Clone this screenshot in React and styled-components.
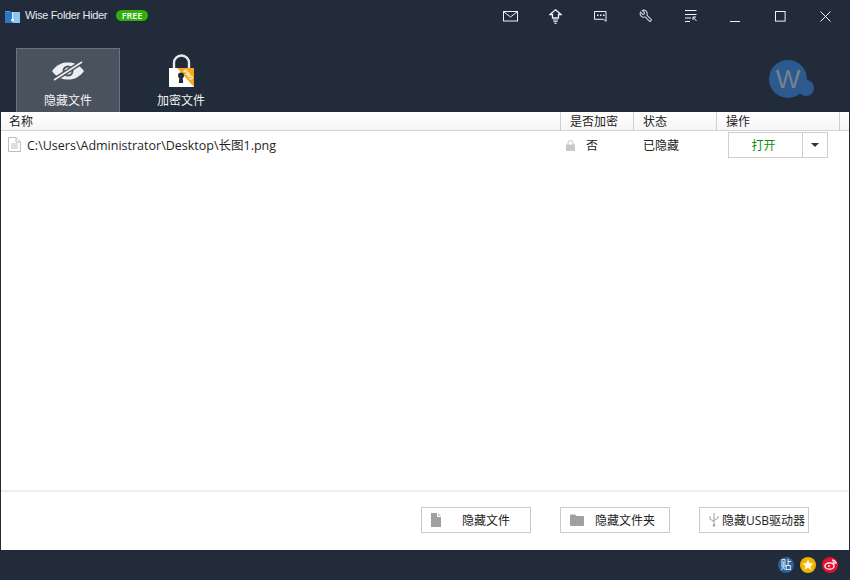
import React from "react";
import styled, { createGlobalStyle } from "styled-components";

const GlobalStyle = createGlobalStyle`
  html, body {
    margin: 0;
    padding: 0;
    background: #212b3a;
  }
  body {
    font-family: "Open Sans", "Noto Sans CJK SC", sans-serif;
    font-size: 12px;
    color: #222;
  }
  * {
    box-sizing: border-box;
  }
`;

const Window = styled.div`
  width: 850px;
  height: 580px;
  display: flex;
  flex-direction: column;
  background: #212b3a;
  overflow: hidden;
`;

const TitleBar = styled.div`
  height: 32px;
  display: flex;
  align-items: center;
  padding-left: 5px;
  padding-right: 2px;
`;

const AppName = styled.span`
  margin-left: 5px;
  margin-bottom: 2px;
  color: #e6e9ee;
  font-family: "Liberation Sans", sans-serif;
  font-size: 11px;
  letter-spacing: -0.35px;
`;

const FreeBadge = styled.span`
  margin-left: 9px;
  margin-bottom: 2px;
  width: 32px;
  height: 11px;
  border-radius: 6px;
  background: #2fb00c;
  color: #fff;
  font-size: 9px;
  font-weight: 600;
  line-height: 11px;
  text-align: center;
`;

const WindowTools = styled.div`
  margin-left: auto;
  display: flex;
`;

const ToolButton = styled.div`
  width: 45px;
  height: 32px;
  display: flex;
  align-items: center;
  justify-content: center;
  color: #f0f2f5;
`;

const TabBar = styled.div`
  height: 80px;
  display: flex;
  align-items: flex-end;
  gap: 9px;
  padding: 0 43px 0 16px;
`;

const Tab = styled.div`
  width: 104px;
  height: 64px;
  display: flex;
  flex-direction: column;
  align-items: center;
  justify-content: flex-end;
  gap: ${(p) => (p.$active ? "10px" : "3px")};
  padding-bottom: 3px;
  color: #f2f4f7;
  font-size: 12px;
  background: ${(p) => (p.$active ? "#4a525e" : "transparent")};
  border: 1px solid ${(p) => (p.$active ? "#6a727d" : "transparent")};
  border-bottom: 0;
`;

const Avatar = styled.div`
  position: relative;
  margin-left: auto;
  margin-bottom: 14px;
  width: 38px;
  height: 38px;
  border-radius: 50%;
  background: #2c5a8e;
  color: #75828f;
  font-family: "Liberation Sans", sans-serif;
  font-size: 26px;
  line-height: 38px;
  text-align: center;
  &::after {
    content: "";
    position: absolute;
    left: 29px;
    top: 20px;
    width: 16px;
    height: 16px;
    border-radius: 50%;
    background: #2c5a8e;
  }
`;

const Panel = styled.div`
  flex: 1;
  margin: 0 1px;
  background: #fff;
  display: flex;
  flex-direction: column;
  min-height: 0;
`;

const columns = "560px 73px 83px 123px 1fr";

const ListHeader = styled.div`
  height: 19px;
  display: grid;
  grid-template-columns: ${columns};
  background: linear-gradient(#fff, #f6f6f6);
  border-bottom: 1px solid #d4d4d4;
`;

const HeaderCell = styled.div`
  padding-left: ${(p) => p.$pad || 9}px;
  border-right: 1px solid #d0d0d0;
  font-size: 12px;
  line-height: 19px;
  color: #222;
`;

const HeaderEnd = styled.div``;

const ListBody = styled.div`
  flex: 1;
  border-bottom: 2px solid #eeeeee;
`;

const FileRow = styled.div`
  height: 28px;
  display: grid;
  grid-template-columns: ${columns};
  align-items: center;
`;

const NameCell = styled.div`
  display: flex;
  align-items: center;
  gap: 6px;
  padding-left: 7px;
  padding-bottom: 2px;
  font-size: 12.5px;
  color: #1f1f1f;
`;

const EncryptCell = styled.div`
  display: flex;
  align-items: center;
  gap: 11px;
  padding-left: 5px;
`;

const StatusCell = styled.div`
  padding-left: 9px;
`;

const ActionCell = styled.div`
  padding-left: 11px;
`;

const SplitButton = styled.div`
  width: 100px;
  height: 26px;
  display: flex;
  border: 1px solid #cfcfcf;
`;

const OpenPart = styled.div`
  width: 74px;
  display: flex;
  align-items: center;
  justify-content: center;
  padding-right: 4px;
  border-right: 1px solid #cfcfcf;
  color: #0f8f0f;
`;

const ArrowPart = styled.div`
  flex: 1;
  display: flex;
  align-items: center;
  justify-content: center;
  &::before {
    content: "";
    border-left: 4px solid transparent;
    border-right: 4px solid transparent;
    border-top: 4px solid #333;
  }
`;

const ActionBar = styled.div`
  height: 58px;
  display: flex;
  align-items: center;
  justify-content: flex-end;
  gap: 29px;
  padding-right: 40px;
  padding-bottom: 2px;
`;

const ActionButton = styled.div`
  width: 110px;
  height: 26px;
  display: flex;
  align-items: center;
  padding-left: ${(p) => p.$pad}px;
  border: 1px solid #cbcbcb;
  background: #fff;
  color: #222;
  font-size: 12px;
`;

const ActionLabel = styled.span`
  margin-left: ${(p) => p.$gap}px;
  white-space: nowrap;
`;

const StatusBar = styled.div`
  height: 30px;
  display: flex;
  align-items: center;
  justify-content: flex-end;
  gap: 6px;
  padding-right: 12px;
  padding-bottom: 1px;
`;

const Social = styled.div`
  width: 16px;
  height: 16px;
  border-radius: 50%;
  background: ${(p) => p.$bg};
  color: #fff;
  display: flex;
  align-items: center;
  justify-content: center;
  font-size: 11px;
  line-height: 16px;
`;

const MailIcon = () => (
  <svg width="15" height="11" viewBox="0 0 15 11" fill="none" stroke="currentColor">
    <rect x="0.5" y="0.5" width="14" height="9.5" />
    <path d="M1 1l6.5 5L14 1" />
  </svg>
);

const UpdateIcon = () => (
  <svg width="13" height="15" viewBox="0 0 13 15" fill="none" stroke="currentColor">
    <path d="M6.5 0.8L12 5.5H9.5V9H3.5V5.5H1z" strokeWidth="1.3" />
    <path d="M4 11h5M4.5 12.7h4M5.5 14.4h2" />
  </svg>
);

const ChatIcon = () => (
  <svg width="13" height="12" viewBox="0 0 13 12" fill="none" stroke="currentColor">
    <path d="M0.5 1.5h11.5v9.8l-2.5-2H0.5z" />
    <path d="M3 5.2h1.5M6 5.2h1.5M9 5.2h1.5" strokeWidth="1.6" />
  </svg>
);

const WrenchIcon = () => (
  <svg width="14" height="14" viewBox="0 0 24 24" fill="none" stroke="#d4d8dd" strokeWidth="1.8" transform="scale(-1 1)">
    <path d="M14.7 6.3a1 1 0 0 0 0 1.4l1.6 1.6a1 1 0 0 0 1.4 0l3.77-3.77a6 6 0 0 1-7.94 7.94l-6.91 6.91a2.12 2.12 0 0 1-3-3l6.91-6.91a6 6 0 0 1 7.94-7.94l-3.76 3.76z" />
  </svg>
);

const MenuIcon = () => (
  <svg width="12" height="12" viewBox="0 0 12 12" fill="none" stroke="currentColor">
    <path d="M0 .5h11.5M0 4.5h11.5M0 8h6M0 11.5h5" />
    <path d="M8 7l3.5 4M8 7v3M8 7h3" />
  </svg>
);

const MinIcon = () => (
  <svg width="11" height="11" viewBox="0 0 11 11" stroke="currentColor">
    <path d="M0 10.5h10" />
  </svg>
);

const MaxIcon = () => (
  <svg width="11" height="11" viewBox="0 0 11 11" fill="none" stroke="currentColor">
    <rect x="0.5" y="0.5" width="9.6" height="9.6" />
  </svg>
);

const CloseIcon = () => (
  <svg width="11" height="11" viewBox="0 0 11 11" fill="none" stroke="currentColor">
    <path d="M.5.5l10 10M10.5.5l-10 10" />
  </svg>
);

const FolderLogo = () => (
  <svg width="15" height="13" viewBox="0 0 15 13">
    <path d="M0 1h5l1 1h9v11H0z" fill="#4d9be0" />
    <path d="M0 2h7v11H0z" fill="#2f76c4" />
    <path d="M8 2h7v11H8z" fill="#8cc6f2" />
    <circle cx="7.5" cy="10" r="1.6" fill="#e8eef5" />
    <path d="M7 2h1v7H7z" fill="#e8eef5" />
  </svg>
);

const HiddenEye = () => (
  <svg width="34" height="20" viewBox="0 0 34 20">
    <path d="M1 10C6 3 12 1.5 17 1.5S28 3 33 10c-5 7-11 8.5-16 8.5S6 17 1 10z" fill="#eceef1" />
    <circle cx="17" cy="10" r="4.5" fill="none" stroke="#4a525e" strokeWidth="2" />
    <path d="M3 19L31 1" stroke="#4a525e" strokeWidth="4.5" />
    <path d="M3 19L31 1" stroke="#eceef1" strokeWidth="1.5" />
  </svg>
);

const LockIcon = () => (
  <svg width="26" height="34" viewBox="0 0 26 34">
    <path d="M6 15V9a7.5 7.5 0 0 1 15 0v6" fill="none" stroke="#e6e8eb" strokeWidth="2.4" />
    <rect x="1" y="14" width="25" height="19" fill="#fff" />
    <path d="M9 14h17v19z" fill="#f5a81c" />
    <circle cx="13" cy="21.5" r="3" fill="#222b38" />
    <path d="M11.5 22h3l.7 7h-4.4z" fill="#222b38" />
    <text x="19" y="22" fontSize="5.5" fontWeight="700" fill="#fff" fontFamily="Liberation Sans" textAnchor="middle" transform="rotate(48 19 22)">PRO</text>
  </svg>
);

const FileIcon = () => (
  <svg width="13" height="15" viewBox="0 0 13 15" fill="none" stroke="#bdbdbd">
    <path d="M.5.5H8L12.5 5v9.5H.5z" />
    <path d="M8 .5V5h4.5M3 7h7M3 9h7M3 11h7" />
  </svg>
);

const SmallLock = () => (
  <svg width="9" height="11" viewBox="0 0 9 11">
    <path d="M2 5V3a2.5 2.5 0 0 1 5 0v2" fill="none" stroke="#c4c4c4" />
    <rect y="4.5" width="9" height="6.5" fill="#c8c8c8" />
  </svg>
);

const DocSolid = () => (
  <svg width="10" height="14" viewBox="0 0 10 14">
    <path d="M0 0h6v4h4v10H0z" fill="#a0a0a0" />
    <path d="M7 0l3 3H7z" fill="#c8c8c8" />
  </svg>
);

const FolderSolid = () => (
  <svg width="14" height="12" viewBox="0 0 14 12">
    <path d="M0 1.5A1 1 0 0 1 1 .5h4l1.5 1.5H13a1 1 0 0 1 1 1V11a1 1 0 0 1-1 1H1a1 1 0 0 1-1-1z" fill="#a0a0a0" />
  </svg>
);

const UsbIcon = () => (
  <svg width="10" height="14" viewBox="0 0 10 14" fill="none" stroke="#a0a0a0">
    <path d="M5 0v13M1 3v3l4 2.5M9 3v2l-4 2.5" />
    <circle cx="5" cy="12.5" r="1.2" fill="#a0a0a0" stroke="none" />
  </svg>
);

const StarIcon = () => (
  <svg width="12" height="12" viewBox="0 0 12 12">
    <path d="M6 .5l1.7 3.6 3.8.5-2.8 2.7.7 3.9L6 8.8l-3.4 1.9.7-3.9L.5 4.6l3.8-.5z" fill="#fff6d8" />
  </svg>
);

const WeiboIcon = () => (
  <svg width="13" height="11" viewBox="0 0 13 11" fill="none" stroke="#fff" strokeWidth="1.3">
    <ellipse cx="5.5" cy="7" rx="4.6" ry="3.2" />
    <circle cx="5" cy="7" r="1" fill="#fff" stroke="none" />
    <path d="M8 1.2a3.5 3.5 0 0 1 4 3.8M8.5 3a1.6 1.6 0 0 1 1.8 1.8" />
  </svg>
);

export default function App() {
  const tools = [MailIcon, UpdateIcon, ChatIcon, WrenchIcon, MenuIcon, MinIcon, MaxIcon, CloseIcon];
  return (
    <Window>
      <GlobalStyle />
      <TitleBar>
        <FolderLogo />
        <AppName>Wise Folder Hider</AppName>
        <FreeBadge>FREE</FreeBadge>
        <WindowTools>
          {tools.map((Icon, i) => (
            <ToolButton key={i}>
              <Icon />
            </ToolButton>
          ))}
        </WindowTools>
      </TitleBar>
      <TabBar>
        <Tab $active>
          <HiddenEye />
          隐藏文件
        </Tab>
        <Tab>
          <LockIcon />
          加密文件
        </Tab>
        <Avatar>W</Avatar>
      </TabBar>
      <Panel>
        <ListHeader>
          <HeaderCell $pad={8}>名称</HeaderCell>
          <HeaderCell>是否加密</HeaderCell>
          <HeaderCell>状态</HeaderCell>
          <HeaderCell>操作</HeaderCell>
          <HeaderEnd />
        </ListHeader>
        <ListBody>
          <FileRow>
            <NameCell>
              <FileIcon />
              C:\Users\Administrator\Desktop\长图1.png
            </NameCell>
            <EncryptCell>
              <SmallLock />否
            </EncryptCell>
            <StatusCell>已隐藏</StatusCell>
            <ActionCell>
              <SplitButton>
                <OpenPart>打开</OpenPart>
                <ArrowPart />
              </SplitButton>
            </ActionCell>
          </FileRow>
        </ListBody>
        <ActionBar>
          <ActionButton $pad={9}>
            <DocSolid />
            <ActionLabel $gap={21}>隐藏文件</ActionLabel>
          </ActionButton>
          <ActionButton $pad={9}>
            <FolderSolid />
            <ActionLabel $gap={11}>隐藏文件夹</ActionLabel>
          </ActionButton>
          <ActionButton $pad={9}>
            <UsbIcon />
            <ActionLabel $gap={3}>隐藏USB驱动器</ActionLabel>
          </ActionButton>
        </ActionBar>
      </Panel>
      <StatusBar>
        <Social $bg="#2a6099">贴</Social>
        <Social $bg="#f0b400">
          <StarIcon />
        </Social>
        <Social $bg="#e0122f">
          <WeiboIcon />
        </Social>
      </StatusBar>
    </Window>
  );
}
